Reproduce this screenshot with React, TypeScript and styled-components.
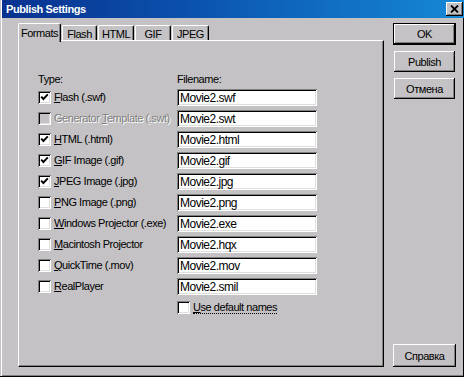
import React from "react";
import styled, { createGlobalStyle, css } from "styled-components";

const BG = "#c4c2c4";
const FONT = `"Liberation Sans", Arial, sans-serif`;

const GlobalStyle = createGlobalStyle`
  html, body { margin: 0; padding: 0; background: ${BG}; }
  * { box-sizing: border-box; }
`;

const Window = styled.div`
  width: 464px;
  height: 377px;
  background: ${BG};
  display: flex;
  flex-direction: column;
  padding: 0 0 2px 2px;
  box-shadow: inset -1px -1px 0 #000, inset 1px 0 0 ${BG}, inset 2px 0 0 #fff,
    inset 0 -2px 0 #808080;
  font-family: ${FONT};
  font-size: 11px;
  letter-spacing: -0.45px;
  color: #000;
  overflow: hidden;
`;

const TitleBar = styled.div`
  height: 18px;
  flex: none;
  display: flex;
  align-items: center;
  justify-content: space-between;
  padding: 0 1px 0 4px;
  background: linear-gradient(to right, #08318f 0%, #0b56b0 45%, #1688d6 100%);
`;

const Title = styled.span`
  color: #fff;
  font-weight: bold;
  font-size: 11px;
  letter-spacing: -0.4px;
`;

const CloseButton = styled.div`
  width: 17px;
  height: 14px;
  background: ${BG};
  display: flex;
  align-items: center;
  justify-content: center;
  box-shadow: inset -1px -1px 0 #000, inset 1px 1px 0 #fff, inset -2px -2px 0 #808080;
`;

const Body = styled.div`
  flex: 1;
  display: flex;
  padding: 5px 0 8px 16px;
  min-height: 0;
`;

const TabArea = styled.div`
  width: 366px;
  display: flex;
  flex-direction: column;
`;

const TabStrip = styled.div`
  height: 17px;
  display: flex;
  align-items: flex-end;
  position: relative;
  z-index: 1;
`;

const Tab = styled.div<{ $active?: boolean; $w: number }>`
  width: ${(p) => p.$w}px;
  height: 15px;
  margin-right: 1px;
  display: flex;
  align-items: center;
  justify-content: center;
  background: ${BG};
  border-top: 1px solid #fff;
  border-left: 1px solid #fff;
  border-right: 1px solid #000;
  border-radius: 2px 2px 0 0;
  box-shadow: inset -1px 0 0 #808080;
  padding-top: 1px;
  ${(p) =>
    p.$active &&
    css`
      height: 19px;
      margin-bottom: -2px;
      padding-bottom: 2px;
    `}
`;

const Panel = styled.div`
  flex: 1;
  background: ${BG};
  border-top: 1px solid #fff;
  border-left: 1px solid #fff;
  border-right: 1px solid #000;
  border-bottom: 1px solid #000;
  box-shadow: inset -1px -1px 0 #808080;
  padding: 32px 0 0 19px;
`;

const FormGrid = styled.div`
  display: grid;
  grid-template-columns: 139px 140px;
  grid-auto-rows: 21px;
  grid-template-rows: 14px;
`;

const ColumnHeader = styled.div`
  line-height: 13px;
`;

const CheckRow = styled.div`
  display: flex;
  align-items: center;
`;

const Box = styled.div<{ $disabled?: boolean }>`
  width: 13px;
  height: 13px;
  flex: none;
  background: ${(p) => (p.$disabled ? BG : "#fff")};
  box-shadow: inset 1px 1px 0 #808080, inset -1px -1px 0 #fff, inset 2px 2px 0 #000,
    inset -2px -2px 0 #dfdfdf;
  display: flex;
  align-items: center;
  justify-content: center;
`;

const Label = styled.span<{ $disabled?: boolean; $focus?: boolean }>`
  margin-left: 3px;
  white-space: nowrap;
  line-height: 13px;
  color: ${(p) => (p.$disabled ? "#808080" : "#000")};
  ${(p) => p.$disabled && "text-shadow: 1px 1px 0 #fff;"}
  ${(p) => p.$focus && "border-bottom: 1px dotted #000; line-height: 12px;"}
`;

const FieldCell = styled.div`
  display: flex;
  align-items: center;
`;

const TextField = styled.input`
  width: 140px;
  height: 17px;
  margin: 0;
  border: none;
  outline: none;
  background: #fff;
  padding: 1px 0 0 3px;
  font-family: ${FONT};
  font-size: 12px;
  letter-spacing: -0.5px;
  color: #000;
  box-shadow: inset 1px 1px 0 #808080, inset -1px -1px 0 #fff, inset 2px 2px 0 #000,
    inset -2px -2px 0 #dfdfdf;
`;

const ButtonColumn = styled.div`
  width: 64px;
  margin-left: 9px;
  display: flex;
  flex-direction: column;
  gap: 6px;
`;

const Button = styled.div<{ $default?: boolean; $bottom?: boolean }>`
  height: ${(p) => (p.$default ? 22 : 21)}px;
  width: ${(p) => (p.$default ? 63 : 61)}px;
  margin-left: ${(p) => (p.$default ? 0 : 1)}px;
  display: flex;
  align-items: center;
  justify-content: center;
  background: ${BG};
  font-size: 11px;
  box-shadow: inset -1px -1px 0 #000, inset 1px 1px 0 #fff, inset -2px -2px 0 #808080;
  ${(p) =>
    p.$default &&
    css`
      border: 1px solid #000;
      box-shadow: inset -1px -1px 0 #000, inset 1px 1px 0 #fff, inset -2px -2px 0 #808080;
    `}
  ${(p) =>
    p.$bottom &&
    css`
      margin-top: auto;
      height: 23px;
      width: 63px;
      margin-left: 0;
    `}
`;

const Check = () => (
  <svg width="13" height="13" viewBox="0 0 13 13">
    <path d="M3.2 5.6 L5.4 8 L9.8 3.4" fill="none" stroke="#000" strokeWidth="1.9" />
  </svg>
);

const CloseGlyph = () => (
  <svg width="9" height="8" viewBox="0 0 9 8">
    <path d="M1 0.5 L8 7.5 M8 0.5 L1 7.5" stroke="#000" strokeWidth="1.8" />
  </svg>
);

type Fmt = { pre: string; acc: string; post: string; checked: boolean; disabled?: boolean; file: string };

const formats: Fmt[] = [
  { pre: "", acc: "F", post: "lash (.swf)", checked: true, file: "Movie2.swf" },
  { pre: "Generator ", acc: "T", post: "emplate (.swt)", checked: false, disabled: true, file: "Movie2.swt" },
  { pre: "", acc: "H", post: "TML (.html)", checked: true, file: "Movie2.html" },
  { pre: "", acc: "G", post: "IF Image (.gif)", checked: true, file: "Movie2.gif" },
  { pre: "", acc: "J", post: "PEG Image (.jpg)", checked: true, file: "Movie2.jpg" },
  { pre: "", acc: "P", post: "NG Image (.png)", checked: false, file: "Movie2.png" },
  { pre: "", acc: "W", post: "indows Projector (.exe)", checked: false, file: "Movie2.exe" },
  { pre: "", acc: "M", post: "acintosh Projector", checked: false, file: "Movie2.hqx" },
  { pre: "", acc: "Q", post: "uickTime (.mov)", checked: false, file: "Movie2.mov" },
  { pre: "", acc: "R", post: "ealPlayer", checked: false, file: "Movie2.smil" },
];

const tabs = [
  { name: "Formats", w: 43, active: true },
  { name: "Flash", w: 35 },
  { name: "HTML", w: 36 },
  { name: "GIF", w: 36 },
  { name: "JPEG", w: 37 },
];

export default function App() {
  return (
    <>
      <GlobalStyle />
      <Window>
        <TitleBar>
          <Title>Publish Settings</Title>
          <CloseButton>
            <CloseGlyph />
          </CloseButton>
        </TitleBar>
        <Body>
          <TabArea>
            <TabStrip>
              {tabs.map((t) => (
                <Tab key={t.name} $active={t.active} $w={t.w}>
                  {t.name}
                </Tab>
              ))}
            </TabStrip>
            <Panel>
              <FormGrid>
                <ColumnHeader>Type:</ColumnHeader>
                <ColumnHeader>Filename:</ColumnHeader>
                {formats.map((f) => (
                  <React.Fragment key={f.file}>
                    <CheckRow>
                      <Box $disabled={f.disabled}>{f.checked && <Check />}</Box>
                      <Label $disabled={f.disabled}>
                        {f.pre}
                        <u>{f.acc}</u>
                        {f.post}
                      </Label>
                    </CheckRow>
                    <FieldCell>
                      <TextField readOnly value={f.file} />
                    </FieldCell>
                  </React.Fragment>
                ))}
                <div />
                <CheckRow>
                  <Box />
                  <Label $focus>
                    <u>U</u>se default names
                  </Label>
                </CheckRow>
              </FormGrid>
            </Panel>
          </TabArea>
          <ButtonColumn>
            <Button $default>OK</Button>
            <Button>Publish</Button>
            <Button>Отмена</Button>
            <Button $bottom>Справка</Button>
          </ButtonColumn>
        </Body>
      </Window>
    </>
  );
}
